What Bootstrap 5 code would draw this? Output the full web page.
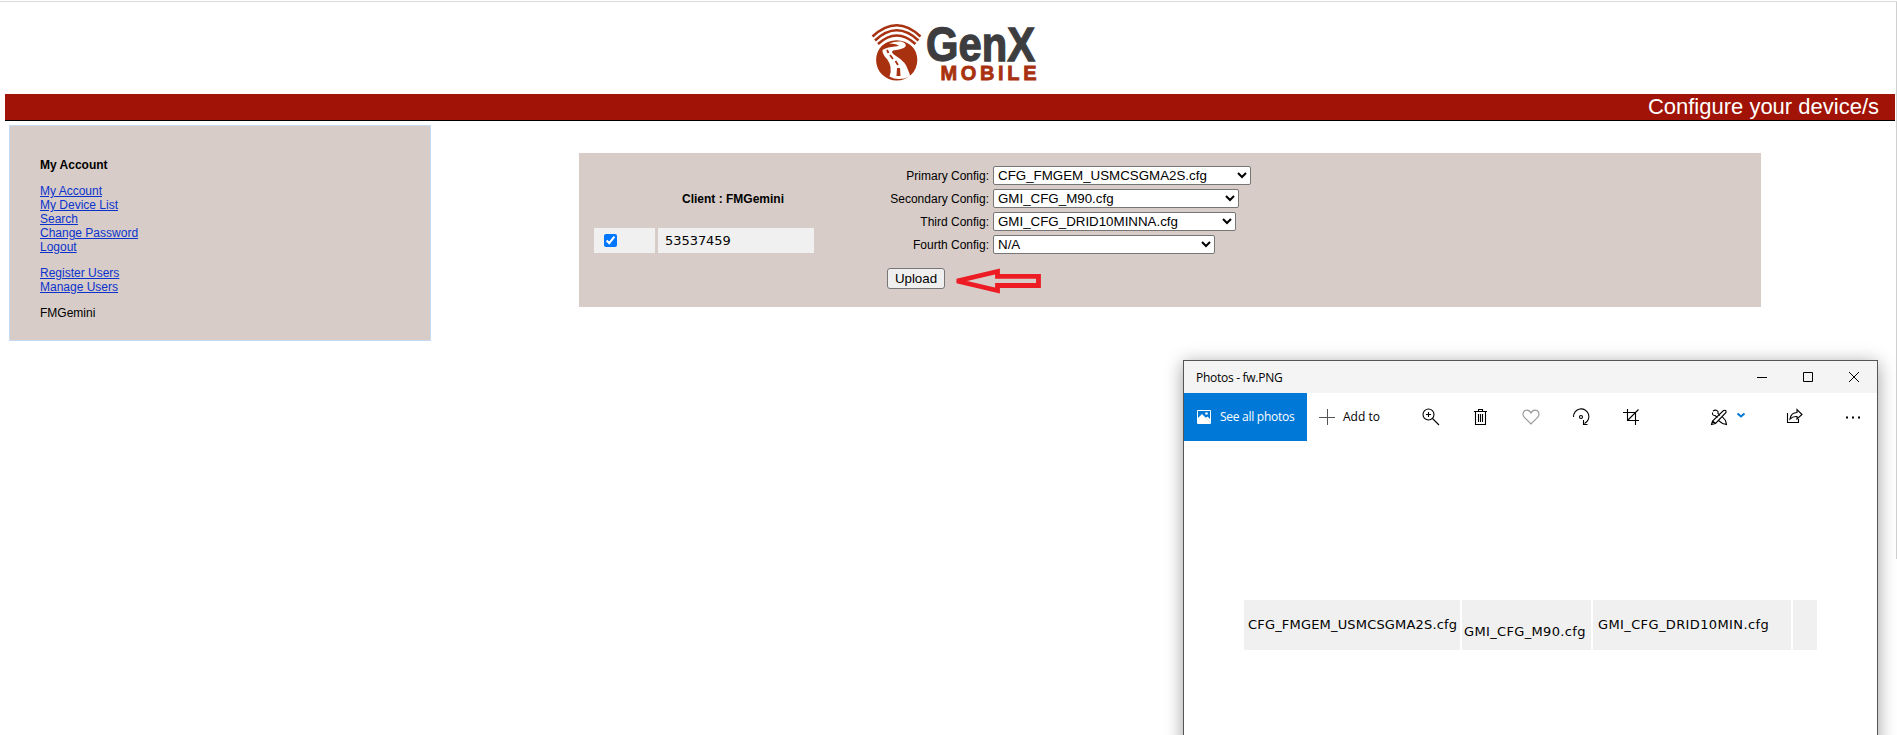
<!DOCTYPE html>
<html lang="en">
<head>
<meta charset="utf-8">
<meta name="viewport" content="width=device-width, initial-scale=1">
<title>GenX Mobile - Configure your device/s</title>
<link rel="stylesheet" href="https://cdn.jsdelivr.net/npm/bootstrap@5.3.0/dist/css/bootstrap.min.css">
<style>
body{font:12px/14px "Liberation Sans",Arial,sans-serif;color:#000;background:#fff;height:735px;overflow:hidden}
.page{height:735px;border-top:1px solid #d9d9d9;margin-top:1px;background:linear-gradient(#d0d0d0,#d0d0d0) right top/1px 557px no-repeat;padding-right:1px}
.brand{height:92px;padding:18px 0 0 869px}
.brand svg{display:block}
.titlebar{height:27px;margin:0 1px 0 5px;background:#a11306;border-bottom:1px solid #000;color:#fff;font-size:22px;line-height:25px;padding-right:16px}
.side{width:422px;height:216px;margin:4px 0 0 9px;padding:32px 30px 0;background:#d7ccc8;border:1px solid #c6dcf5}
.side a{color:#0b33cc;display:table}
.side p{margin:0 0 12px}
.config{width:1182px;height:154px;margin:32px 0 0 148px;background:#d7ccc8;padding:13px 0 0 15px}
.client{width:220px;padding-top:26px}
.client h2{font-size:12px;line-height:14px;font-weight:700;margin:0 0 22px 88px}
.cell{background:#f0f0f0;height:25px;font:13px/25px "DejaVu Sans",Verdana,sans-serif}
.cell input{width:13px;height:13px;margin:6px 0 0 10px;display:block;accent-color:#0075ff}
.serial{letter-spacing:-.05px;padding-left:7px}
.forms{margin-left:58px}
.forms label{width:117px;text-align:right;margin-right:4px;padding-top:3px}
.forms .line{height:23px}
.forms select{height:19px;border:1px solid #767676;border-radius:2px;background:#fff;color:#000;font:13.33px "Liberation Sans",Arial,sans-serif;padding:0}
.upload{width:58px;height:21px;border:1px solid #767676;border-radius:3px;background:#efefef;font:13.33px/17px "Liberation Sans",Arial,sans-serif;padding:0;color:#000}
.photos{position:absolute;left:1183px;top:360px;width:695px;height:400px;background:#fff;border:1px solid #555;box-shadow:0 3px 17px rgba(0,0,0,.38);font:12px/16px "Open Sans","Segoe UI",sans-serif}
.ptitle{height:32px;background:#f4f4f4;padding-left:12px}
.ptitle span{letter-spacing:-.28px;padding-top:2px}
.ptools{height:48px}
.seeall{width:123px;height:48px;background:#0078d7;color:#fff;padding-left:13px;letter-spacing:-.27px;white-space:nowrap}
.ptools svg,.ptitle svg{display:block;flex:none}
.shots{margin:159px 0 0 60px;gap:2px}
.shots div{height:50px;background:#f0f0f0;font:13px/50px "DejaVu Sans",Verdana,sans-serif;white-space:nowrap}
.s1{width:216px;padding-left:4px;letter-spacing:.18px}
.s2{width:129px;padding:7px 0 0 2px;letter-spacing:.34px}
.s3{width:198px;padding-left:5px;letter-spacing:.38px}
</style>
</head>
<body>
<div class="page">
  <header class="brand">
    <svg width="172" height="68" viewBox="869 20 172 68">
      <circle cx="896.700" cy="60" r="20.600" fill="#a8310f"/>
      <path d="M877 45Q896.500 29 916 45" fill="none" stroke="#fff" stroke-width="6.500"/>
      <g fill="none" stroke="#a8310f" stroke-width="2.600">
        <path d="M872.500 36.500Q896.700 14 920.500 36.500"/><path d="M875 40.500Q896.700 20 918.500 40.500"/><path d="M878 44Q896.700 27 915.500 44"/>
      </g>
      <path d="M889 43.500Q895 41 901 41.500Q907 43 905.500 46.500Q904 49 893 50.500Q890 52 896 56Q906 62 908 70Q910 74 910 76.500Q898 81.500 889.500 76.500Q893 67 887 59Q882 54 882.500 50Q886 47 899 46Q897 43.500 889 43.500Z" fill="#fff"/>
      <path d="M887 50l1.500 3M890 55l3 4M895.500 61l2.500 4" fill="none" stroke="#a8310f" stroke-width="1.800"/><path d="M897 68h3l.5 8h-4z" fill="#a8310f"/>
      <text x="926" y="61" font-family="Liberation Sans,Arial,sans-serif" font-weight="700" font-size="49" fill="#3d3d3f" stroke="#3d3d3f" stroke-width="1.300" textLength="109" lengthAdjust="spacingAndGlyphs">GenX</text>
      <text x="940.500" y="80" font-family="Liberation Sans,Arial,sans-serif" font-weight="700" font-size="20" fill="#a8310f" stroke="#a8310f" stroke-width=".8" textLength="96">MOBILE</text>
    </svg>
  </header>
  <div class="titlebar text-end">Configure your device/s</div>
  <main class="d-flex">
    <nav class="side">
      <p><b>My Account</b></p>
      <p><a href="#">My Account</a><a href="#">My Device List</a><a href="#">Search</a><a href="#">Change Password</a><a href="#">Logout</a></p>
      <p><a href="#">Register Users</a><a href="#">Manage Users</a></p>
      <p>FMGemini</p>
    </nav>
    <section class="config d-flex">
      <div class="client">
        <h2>Client : FMGemini</h2>
        <div class="d-flex">
          <div class="cell" style="width:61px"><input type="checkbox" checked></div>
          <div class="cell serial" style="width:156px;margin-left:3px">53537459</div>
        </div>
      </div>
      <form class="forms">
        <div class="line d-flex"><label>Primary Config:</label><select style="width:258px"><option>CFG_FMGEM_USMCSGMA2S.cfg</option></select></div>
        <div class="line d-flex"><label>Secondary Config:</label><select style="width:246px"><option>GMI_CFG_M90.cfg</option></select></div>
        <div class="line d-flex"><label>Third Config:</label><select style="width:243px"><option>GMI_CFG_DRID10MINNA.cfg</option></select></div>
        <div class="line d-flex"><label>Fourth Config:</label><select style="width:222px"><option>N/A</option></select></div>
        <div class="d-flex" style="margin:10px 0 0 15px">
          <button type="button" class="upload">Upload</button>
          <svg width="90" height="27" viewBox="953 268 90 27" style="margin-left:8px"><path d="M957 281L997.500 271.500V276.300H1038.500V285.500H997.500V290.500Z" fill="none" stroke="#ed1c24" stroke-width="4.800"/></svg>
        </div>
      </form>
    </section>
  </main>
</div>
<section class="photos">
  <div class="ptitle d-flex align-items-center">
    <span>Photos - fw.PNG</span>
    <svg class="ms-auto" width="133" height="32" viewBox="1744 361 133 32" fill="none" stroke="#000"><path d="M1757 377.500H1767M1803.500 372.500h9v9h-9zM1849 372l10 10M1859 372l-10 10"/></svg>
  </div>
  <div class="ptools d-flex">
    <div class="seeall d-flex align-items-center">
      <svg width="14" height="14" viewBox="0 0 14 14"><path d="M.5.500H13.500V13.500H.500Z" fill="none" stroke="#fff"/><path d="M1 8L5 4L13 12V13H1Z" fill="#fff"/><path d="M8.500 8L10.500 6.500L13 9V12Z" fill="#fff"/><circle cx="9.500" cy="3.500" r="1.300" fill="#fff"/></svg>
      <span style="margin-left:9px">See all photos</span>
    </div>
    <svg width="17" height="48" viewBox="0 0 17 48" style="margin-left:12px"><path d="M0 24.500H16M8.500 16V32" stroke="#555" /></svg>
    <span class="align-self-center" style="margin-left:7px;width:66px">Add to</span>
    <svg width="468" height="48" viewBox="1409 393 468 48" fill="none" stroke="#000" stroke-width="1.100">
      <circle cx="1428.500" cy="414.500" r="5.500"/><path d="M1432.500 418.500L1439 425M1426 414.500h5M1428.500 412v5"/>
      <path d="M1474 411.500H1487M1478.500 411V409.500H1482.500V411M1475.500 412V424.500H1485.500V412M1478.500 414V422M1480.500 414V422M1482.500 414V422"/>
      <path d="M1531 424L1524 417Q1521.500 413 1525 410.500Q1529 409 1531 413Q1533 409 1537 410.500Q1540.500 413 1538 417Z" stroke="#999"/>
      <path d="M1573.500 417A7.700 7.700 0 1 1 1584.500 423.500M1583.500 420V424.500H1587.500"/><circle cx="1581" cy="417" r="1.500"/>
      <path d="M1623 412.500H1635.500V425M1627.500 409V420.500H1639M1627.500 420.500L1638.500 409.500"/>
      <path d="M1711.500 424.500L1712.500 421L1723.500 410.500Q1726.500 409.500 1726 412.500L1715.500 423.500ZM1713 411Q1716 409 1718 411.500V413.500L1720 415.500M1712.500 412.500Q1712 415.500 1715 415.500L1717.500 417.500M1722.500 417L1725.500 420.500L1726.500 424.500L1722.500 423.500L1718.500 420.500M1712.500 421L1715.500 423.500"/>
      <path d="M1737.500 413.500L1741 416.500L1744.500 413.500" stroke="#0078d7" stroke-width="2"/>
      <path d="M1787.500 413V422.500H1798.500V419M1790 419Q1791 412.500 1797 412.500V409.500L1802 414.500L1797 419V416.500Q1793 416 1790 419Z"/>
      <path d="M1846 417.500h2M1852 417.500h2M1858 417.500h2" stroke-width="2"/>
    </svg>
  </div>
  <div class="shots d-flex">
    <div class="s1">CFG_FMGEM_USMCSGMA2S.cfg</div>
    <div class="s2">GMI_CFG_M90.cfg</div>
    <div class="s3">GMI_CFG_DRID10MIN.cfg</div>
    <div style="width:24px"></div>
  </div>
</section>
<script src="https://cdn.jsdelivr.net/npm/bootstrap@5.3.0/dist/js/bootstrap.bundle.min.js"></script>
</body>
</html>
